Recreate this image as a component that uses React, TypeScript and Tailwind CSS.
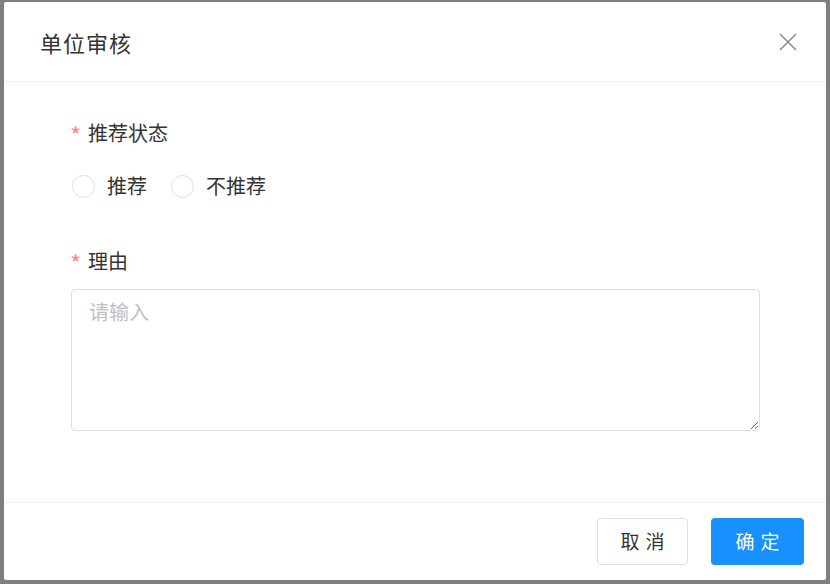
import { useState } from "react";

const font = { fontFamily: '"Noto Sans CJK SC", "Noto Sans", sans-serif' };

function Label({ text }: { text: string }) {
  return (
    <div className="flex h-6 items-center text-[20px] leading-6 text-[#333]">
      <span className="mr-[4px] w-[14px] pt-[4px] text-[24px] leading-none text-[#f78989]">*</span>
      {text}
    </div>
  );
}

function Radio({ label, checked, onClick }: { label: string; checked: boolean; onClick: () => void }) {
  return (
    <button type="button" onClick={onClick} className="flex items-center">
      <span
        className={
          checked
            ? "h-[23px] w-[23px] rounded-full border-[7px] border-[#1890ff] bg-white"
            : "h-[23px] w-[23px] rounded-full border border-[#dcdfe6] bg-white"
        }
      />
      <span className="ml-[12px] text-[20px] leading-6 text-[#333]">{label}</span>
    </button>
  );
}

export default function App() {
  const [value, setValue] = useState<string | null>(null);

  return (
    <div className="h-[584px] w-[830px] bg-[#7f7f7f] pl-[4px] pt-[2px]" style={font}>
      <div className="flex h-[578px] w-[822px] flex-col rounded-[2px] bg-white">
        <div className="flex h-[80px] shrink-0 items-center justify-between border-b border-[#f0f0f0] pl-[36px] pr-[28px]">
          <span className="text-[22px] leading-none tracking-[1px] text-[#333]">单位审核</span>
          <svg width="20" height="20" viewBox="0 0 20 20" fill="none" stroke="#8c8c8c" strokeWidth="1.6">
            <path d="M2 2L18 18M18 2L2 18" />
          </svg>
        </div>

        <div className="flex-1 pl-[66px] pr-[66px] pt-[39px]">
          <Label text="推荐状态" />
          <div className="mt-[29px] flex h-6 items-center gap-[24px] pl-[2px]">
            <Radio label="推荐" checked={value === "yes"} onClick={() => setValue("yes")} />
            <Radio label="不推荐" checked={value === "no"} onClick={() => setValue("no")} />
          </div>

          <div className="mt-[51px]">
            <Label text="理由" />
          </div>
          <textarea
            placeholder="请输入"
            className="mt-[16px] ml-[1px] block h-[142px] w-[689px] rounded-[4px] border border-[#dcdfe6] px-[17px] py-[10px] text-[20px] leading-6 text-[#333] outline-none placeholder:text-[#bfbfbf]"
          />
        </div>

        <div className="flex h-[78px] shrink-0 items-center justify-end gap-[23px] border-t border-[#f0f0f0] pr-[22px]">
          <button
            type="button"
            className="h-[47px] w-[91px] rounded-[4px] border border-[#dcdfe6] bg-white text-[19px] tracking-[6px] text-[#333]"
          >
            <span className="pl-[6px]">取消</span>
          </button>
          <button
            type="button"
            className="h-[47px] w-[93px] rounded-[4px] bg-[#1890ff] text-[19px] tracking-[6px] text-white"
          >
            <span className="pl-[6px]">确定</span>
          </button>
        </div>
      </div>
    </div>
  );
}
